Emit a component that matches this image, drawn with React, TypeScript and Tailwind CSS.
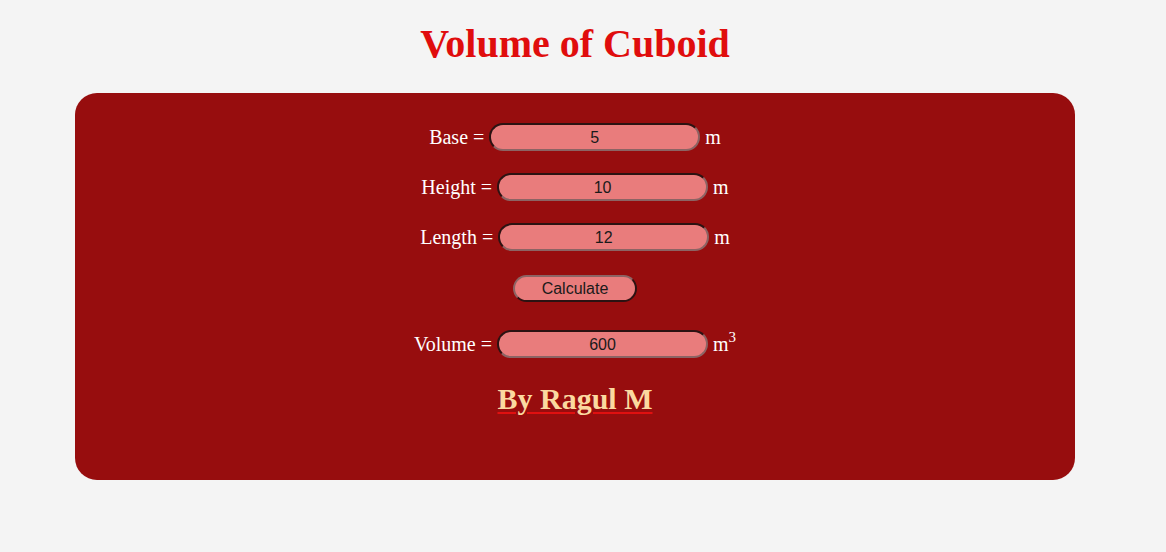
import React from "react";

function Field({ label, value, unit }: { label: string; value: string; unit: React.ReactNode }) {
  return (
    <div className="flex items-center justify-center h-[28px]">
      <span className="text-[20px] text-white font-['Liberation_Serif',serif] mr-[5px]">{label} =</span>
      <input
        readOnly
        value={value}
        className="w-[211px] h-[28px] pt-[2px] rounded-full bg-[#e97c7c] text-center text-[16px] text-[#1a1a1a] font-['Liberation_Sans',Arial,sans-serif] border-2 border-t-[#2c1212] border-l-[#2c1212] border-b-[#8c6464] border-r-[#8c6464] outline-none"
      />
      <span className="text-[20px] text-white font-['Liberation_Serif',serif] ml-[5px]">{unit}</span>
    </div>
  );
}

export default function App() {
  return (
    <div className="min-h-[552px] bg-[#f4f4f4] font-['Liberation_Serif',serif] pt-[18px]">
      <div className="w-[1150px]">
        <h1 className="text-center text-[40px] font-bold text-[#e00d0d] leading-[52px]">Volume of Cuboid</h1>
        <div className="ml-[75px] w-[1000px] mt-[23px] h-[387px] rounded-[22px] bg-[#970d0e] pt-[30px] flex flex-col items-center">
          <div className="flex flex-col items-center gap-[22px]">
            <Field label="Base" value="5" unit="m" />
            <Field label="Height" value="10" unit="m" />
            <Field label="Length" value="12" unit="m" />
            <button className="mt-[2px] w-[124px] h-[27px] rounded-full bg-[#e97c7c] text-[16px] text-[#1a1a1a] font-['Liberation_Sans',Arial,sans-serif] border-2 border-t-[#8c6464] border-l-[#8c6464] border-b-[#2c1212] border-r-[#2c1212]">
              Calculate
            </button>
          </div>
          <div className="mt-[28px]">
            <Field
              label="Volume"
              value="600"
              unit={
                <>
                  m<sup className="text-[15px] relative -top-[9px]">3</sup>
                </>
              }
            />
          </div>
          <div className="mt-[18px] text-[30px] font-bold text-[#fbd9a0] underline decoration-[#e01010] decoration-[2px] underline-offset-[3px] font-['Liberation_Serif',serif]">
            By Ragul M
          </div>
        </div>
      </div>
    </div>
  );
}
